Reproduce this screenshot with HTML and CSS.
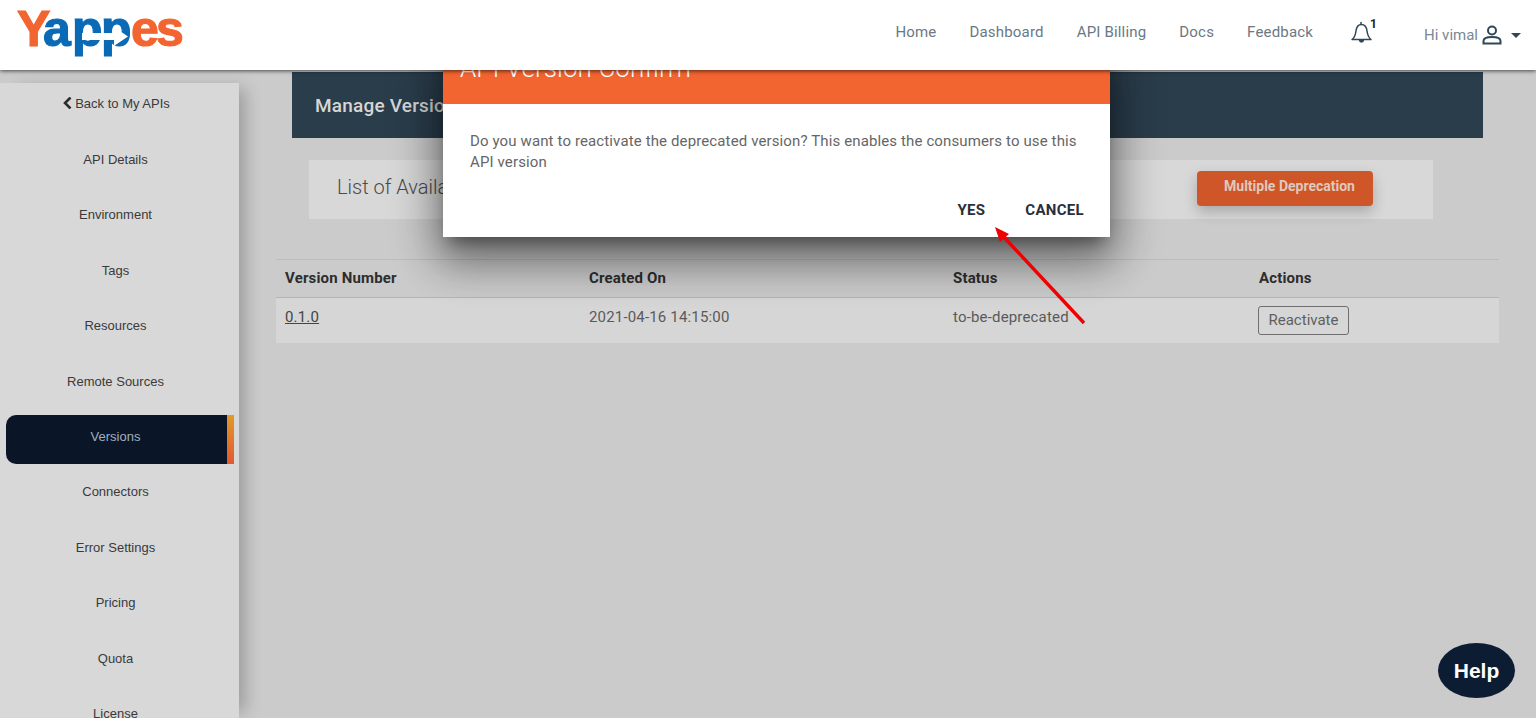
FILE: index.html
```html
<!DOCTYPE html>
<html lang="en">
<head>
<meta charset="utf-8">
<title>Manage Versions</title>
<link rel="stylesheet" href="styles.css">
</head>
<body>
<header class="topbar">
  <svg class="logo" viewBox="0 0 170 54" width="170" height="54" aria-label="Yappes">
    <text y="36"><tspan class="logo-o" x="0">Y</tspan><tspan class="logo-b" x="26 55 84">app</tspan><tspan class="logo-o" x="114 139">es</tspan></text>
    <path class="logo-arrow" d="M65 23H97V17L111 26.500 97 36V30H65Z"/>
  </svg>
  <nav class="nav">
    <a class="nav-link">Home</a>
    <a class="nav-link">Dashboard</a>
    <a class="nav-link">API Billing</a>
    <a class="nav-link">Docs</a>
    <a class="nav-link">Feedback</a>
    <span class="bell">
      <svg width="24" height="26" viewBox="0 0 24 26" fill="none" stroke="#2f4858" stroke-width="1.500" stroke-linejoin="round" stroke-linecap="round">
        <path d="M2 20.500C5 18.500 5.500 15.500 6 12C6.500 8 8.500 5.500 11.500 5.500C14.500 5.500 16.500 8 17 12C17.500 15.500 18.500 18.500 21 20.500Z"/>
        <path d="M11 5V3.500"/>
        <path d="M9.500 21C9.800 23.500 13.200 23.500 13.500 21" fill="#2f4858"/>
      </svg>
      <b class="bell-count">1</b>
    </span>
    <span class="user">
      <span class="user-name">Hi vimal</span>
      <svg width="20" height="20" viewBox="0 0 20 20" fill="none" stroke="#2f4858" stroke-width="2">
        <circle cx="10" cy="5.500" r="4"/>
        <path d="M1.500 18.500V16C1.500 13.500 5 12 10 12C15 12 18.500 13.500 18.500 16V18.500Z"/>
      </svg>
      <svg class="caret" width="10" height="5" viewBox="0 0 10 5"><path d="M0 0H10L5 5Z" fill="#2f4858"/></svg>
    </span>
  </nav>
</header>

<div class="layout">
  <aside class="sidebar">
    <a class="side-item side-back">
      <svg class="chev" width="10" height="12" viewBox="0 0 10 12"><path d="M7.500 0.500L2 6L7.500 11.500" fill="none" stroke="#2c2c2c" stroke-width="2.600"/></svg>Back to My APIs
    </a>
    <a class="side-item">API Details</a>
    <a class="side-item">Environment</a>
    <a class="side-item">Tags</a>
    <a class="side-item">Resources</a>
    <a class="side-item">Remote Sources</a>
    <a class="side-item active">Versions</a>
    <a class="side-item">Connectors</a>
    <a class="side-item">Error Settings</a>
    <a class="side-item">Pricing</a>
    <a class="side-item">Quota</a>
    <a class="side-item">License</a>
  </aside>

  <main class="main">
    <div class="page-bar"><h1 class="page-title">Manage Versions</h1></div>
    <div class="list-bar">
      <h2 class="list-title">List of Available Versions</h2>
      <button class="btn-dep">Multiple Deprecation</button>
    </div>
    <div class="table">
      <div class="row head">
        <span>Version Number</span><span>Created On</span><span>Status</span><span>Actions</span>
      </div>
      <div class="row body-row">
        <a class="ver-link">0.1.0</a><span>2021-04-16 14:15:00</span><span>to-be-deprecated</span>
        <span><button class="btn-react">Reactivate</button></span>
      </div>
    </div>
  </main>
</div>

<section class="dialog">
  <div class="dialog-head">API Version Confirm</div>
  <p class="dialog-text">Do you want to reactivate the deprecated version? This enables the consumers to use this API version</p>
  <div class="dialog-actions">
    <button class="dialog-btn">Yes</button>
    <button class="dialog-btn">Cancel</button>
  </div>
</section>

<svg class="annot" width="100" height="105" viewBox="0 0 100 105">
  <path d="M92 97L10 9" stroke="#f00000" stroke-width="3.400" fill="none"/>
  <path d="M3 1L17 8L8 16Z" fill="#f00000"/>
</svg>

<div class="help">Help</div>
</body>
</html>
```

FILE: styles.css
```css
* { box-sizing: border-box; }
html, body { margin: 0; height: 100%; }
body {
  overflow: hidden;
  background: #cbcbcb;
  font-family: Roboto, "Liberation Sans", sans-serif;
  position: relative;
  height: 718px;
}
.topbar {
  position: relative;
  z-index: 5;
  height: 70px;
  background: #fff;
  box-shadow: 0 1px 4px rgba(0,0,0,.65);
  display: flex;
  align-items: flex-start;
  justify-content: space-between;
  padding: 0 15px 0 17px;
}
.logo { margin-top: 10px; overflow: visible; }
.logo text {
  font-family: "Liberation Sans", sans-serif;
  font-weight: 700;
  font-size: 50px;
  stroke-width: 1.200px;
}
.logo-o { fill: #f26530; stroke: #f26530; }
.logo-b { fill: #0a6ab5; stroke: #0a6ab5; }
.logo-arrow { fill: #fff; }
.nav { display: flex; align-items: flex-start; }
.nav-link {
  font-size: 15px;
  line-height: 20px;
  letter-spacing: .18px;
  color: #6a7885;
  margin-top: 22px;
  margin-right: 33px;
}
.bell { display: flex; margin: 19px 0 0 4px; width: 74px; position: relative; }
.bell-count { position: absolute; left: 20px; top: -2px; font-size: 12px; color: #222; }
.user { display: flex; align-items: center; margin-top: 25px; }
.user-name { font-size: 15px; line-height: 20px; color: #7a8893; margin-right: 4px; }
.caret { margin-left: 9px; }

.layout { display: flex; height: 648px; }
.sidebar {
  width: 239px;
  flex: none;
  margin-top: 12.600px;
  padding: 0 5px 0 6px;
  background: #d8d8d8;
  box-shadow: 12px 0 16px -6px rgba(0,0,0,.24);
  display: flex;
  flex-direction: column;
  gap: 6.400px;
  overflow: hidden;
}
.side-item {
  flex: none;
  display: block;
  height: 49px;
  padding: 12px 9px 0 0;
  text-align: center;
  font-family: "Liberation Sans", sans-serif;
  font-size: 13px;
  line-height: 19px;
  color: #3a3a3a;
}
.side-back { padding: 11px 7px 0 0; }
.chev { margin-right: 2px; vertical-align: -1px; }
.active {
  background: #0a1628;
  color: #9fb0c0;
  border-radius: 10px 0 0 10px;
  border-right: 7px solid #e0702c;
  border-image: linear-gradient(#e09a2b, #e2592f) 1;
  border-image-slice: 0 1 0 0;
  padding-right: 2px;
}

.main { flex: 1; padding: 2px 37px 0; min-width: 0; }
.page-bar {
  margin: 0 16px;
  height: 66px;
  background: #2a3d4b;
  display: flex;
  align-items: center;
  padding: 0 23px;
}
.page-title { margin: 0; font-size: 19px; font-weight: 500; letter-spacing: .2px; color: #d6d6d6; }
.list-bar {
  margin: 22px 66px 0 33px;
  height: 59px;
  background: #d8d8d8;
  display: flex;
  align-items: flex-start;
  justify-content: space-between;
  padding: 11px 60px 0 28px;
}
.list-title { margin: 3px 0 0; font-size: 20px; line-height: 26px; font-weight: 300; color: #4a4a4a; }
.btn-dep {
  width: 176px;
  height: 35px;
  border: 0;
  border-radius: 4px;
  background: #cf5628;
  color: #dfc8bd;
  font-family: Roboto, sans-serif;
  font-size: 14px;
  font-weight: 700;
  padding: 0 0 5px 9px;
  box-shadow: 0 6px 14px rgba(0,0,0,.22);
}
.table { margin-top: 40px; font-size: 15px; letter-spacing: .17px; color: #5a5a5a; }
.row { display: grid; grid-template-columns: 304px 364px 306px 1fr; padding-left: 9px; }
.head {
  height: 39px;
  align-items: center;
  padding-bottom: 2px;
  border-top: 1px solid #bcbcbc;
  border-bottom: 1px solid #b4b4b4;
  font-weight: 700;
  color: #2d2d2d;
}
.body-row { height: 45px; background: #d6d6d6; padding-top: 9px; line-height: 20px; }
.ver-link { color: #444; text-decoration: underline; }
.btn-react {
  margin: -1px 0 0 -1px;
  width: 91px;
  height: 29px;
  background: #d6d6d6;
  border: 1px solid #6f6f6f;
  border-radius: 3px;
  font-family: Roboto, sans-serif;
  font-size: 15px;
  color: #5f5f5f;
  padding: 0 0 2px;
}

.dialog {
  position: absolute;
  z-index: 3;
  left: 443px;
  top: 44px;
  width: 667px;
  height: 193px;
  background: #fff;
  box-shadow: 0 11px 15px -7px rgba(0,0,0,.4), 0 24px 38px 3px rgba(0,0,0,.32), 0 9px 46px 8px rgba(0,0,0,.24);
}
.dialog-head {
  height: 60px;
  padding: 9px 17px 0;
  background: #f26430;
  color: #fff;
  font-size: 26px;
  line-height: 30px;
  letter-spacing: .08px;
  font-weight: 300;
}
.dialog-text {
  margin: 27px 24px 0 27px;
  font-size: 15px;
  line-height: 21px;
  letter-spacing: .125px;
  color: #666;
}
.dialog-actions {
  display: flex;
  justify-content: flex-end;
  gap: 40px;
  padding: 27px 26px 0 0;
}
.dialog-btn {
  padding: 0;
  border: 0;
  background: none;
  font-family: Roboto, sans-serif;
  font-size: 15px;
  line-height: 20px;
  font-weight: 700;
  letter-spacing: .3px;
  text-transform: uppercase;
  color: #2a2f3a;
}
.annot { position: absolute; z-index: 4; left: 992px; top: 226px; }
.help {
  position: absolute;
  z-index: 4;
  left: 1438px;
  top: 643px;
  width: 77px;
  height: 55px;
  border-radius: 50%;
  background: #0c1d33;
  color: #fff;
  font-family: "Liberation Sans", sans-serif;
  font-size: 21px;
  font-weight: 700;
  display: flex;
  align-items: center;
  justify-content: center;
}
```
